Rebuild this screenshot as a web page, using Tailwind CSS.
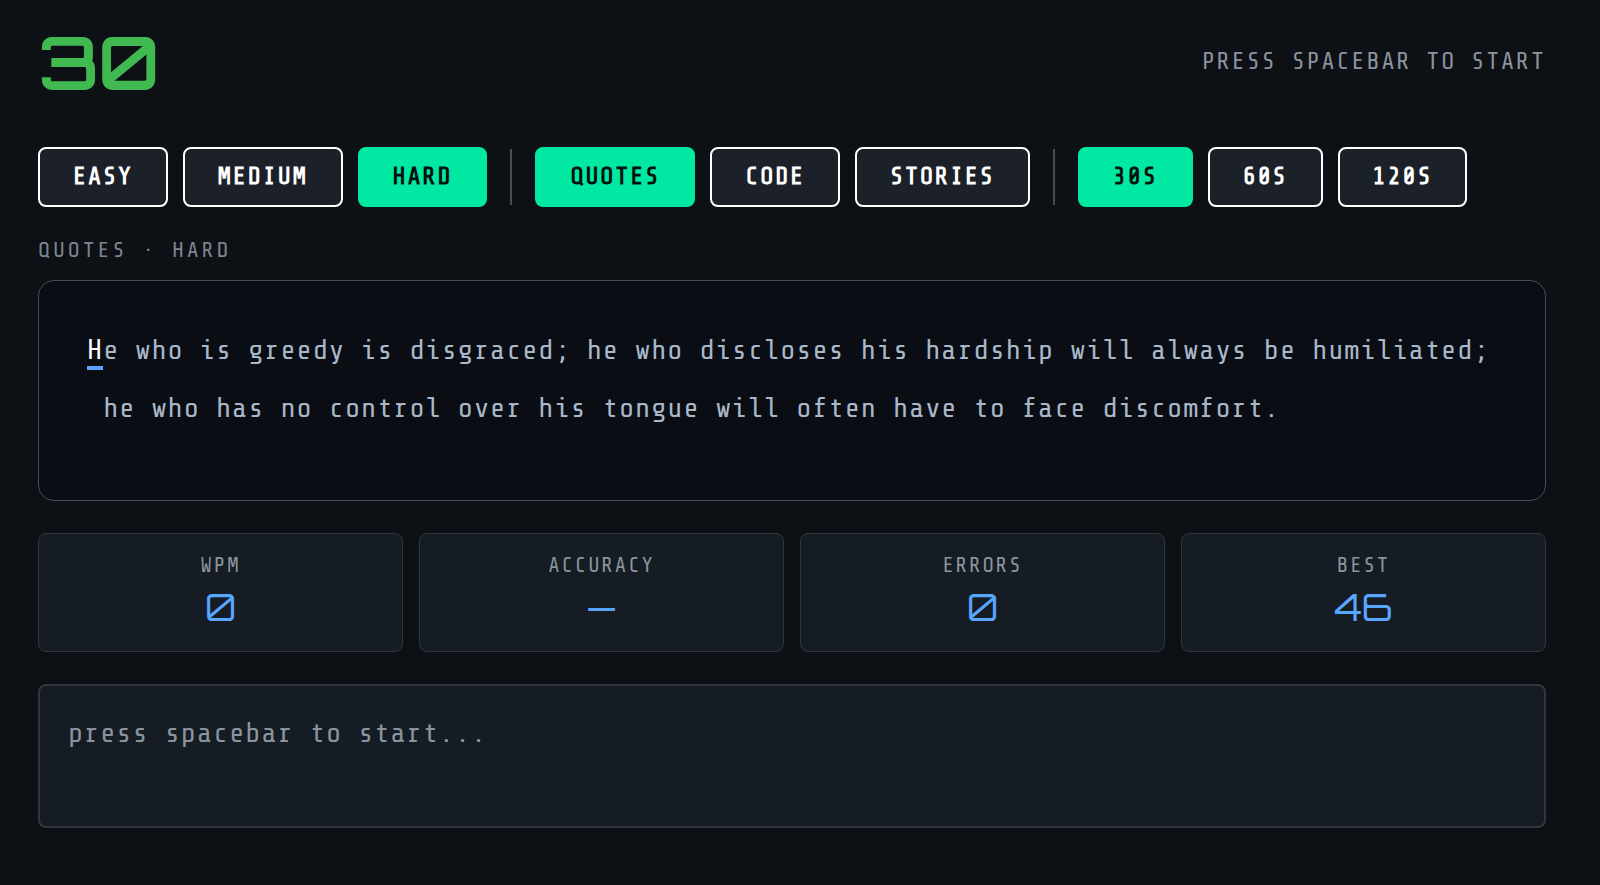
<!DOCTYPE html>
<html lang="en">
<head>
<meta charset="utf-8">
<meta name="viewport" content="width=device-width, initial-scale=1">
<title>Typing test</title>
<script src="https://cdn.jsdelivr.net/npm/@tailwindcss/browser@4"></script>
</head>
<body class="min-h-screen bg-[#0d1014] font-['Share_Tech_Mono','DejaVu_Sans_Mono',monospace] text-[#8b949e]">
<main class="flex flex-col pt-[30px] pr-[54px] pb-14 pl-[38px]">
  <header class="mb-[53px] flex items-center justify-between">
    <div role="timer" class="font-['Orbitron','Inter',sans-serif] text-[74px] leading-[64px] font-semibold tracking-[-1px] text-[#3fb950]">30</div>
    <p class="text-[24px] leading-8 tracking-[2px] text-[#8b949e] uppercase">Press spacebar to start</p>
  </header>

  <nav aria-label="Test options" class="flex flex-wrap items-center gap-[15px] text-[24px] leading-8 font-bold tracking-[2px] text-white">
    <button type="button" class="rounded-lg border-2 border-white bg-[#1c2028] px-[33px] py-3">EASY</button>
    <button type="button" class="rounded-lg border-2 border-white bg-[#1c2028] px-[33px] py-3">MEDIUM</button>
    <button type="button" aria-pressed="true" class="rounded-lg border-2 border-[#00e8a2] bg-[#00e8a2] px-[33px] py-3 text-[#04120d]">HARD</button>
    <span class="mx-2 h-14 w-[2px] bg-[#444c56]"></span>
    <button type="button" aria-pressed="true" class="rounded-lg border-2 border-[#00e8a2] bg-[#00e8a2] px-[33px] py-3 text-[#04120d]">QUOTES</button>
    <button type="button" class="rounded-lg border-2 border-white bg-[#1c2028] px-[33px] py-3">CODE</button>
    <button type="button" class="rounded-lg border-2 border-white bg-[#1c2028] px-[33px] py-3">STORIES</button>
    <span class="mx-2 h-14 w-[2px] bg-[#444c56]"></span>
    <button type="button" aria-pressed="true" class="rounded-lg border-2 border-[#00e8a2] bg-[#00e8a2] px-[33px] py-3 text-[#04120d]">30S</button>
    <button type="button" class="rounded-lg border-2 border-white bg-[#1c2028] px-[33px] py-3">60S</button>
    <button type="button" class="rounded-lg border-2 border-white bg-[#1c2028] px-[33px] py-3">120S</button>
  </nav>

  <p class="mt-[27px] mb-[14px] text-[22px] leading-8 tracking-[3px] text-[#7d8590]">QUOTES · HARD</p>

  <section aria-label="Text to type" class="min-h-[221px] rounded-2xl border border-[#444c56] bg-[#0a0d14] px-12 py-10">
    <p class="text-[28px] leading-[58px] tracking-[1px] text-[#a8b8c8]"><span class="border-b-4 border-[#58a6ff] text-white">H</span>e who is greedy is disgraced; he who discloses his hardship will always be humiliated;<span class="inline-block whitespace-pre"> </span>he who has no control over his tongue will often have to face discomfort.</p>
  </section>

  <dl class="mt-8 grid grid-cols-4 gap-4 text-center">
    <div class="rounded-lg border border-[#30363d] bg-[#151c23] pt-[17px] pb-5">
      <dt class="text-[21px] leading-7 tracking-[2px]">WPM</dt>
      <dd class="mt-1 font-['Orbitron','Inter',sans-serif] text-[37px] leading-12 font-normal text-[#58a6ff]">0</dd>
    </div>
    <div class="rounded-lg border border-[#30363d] bg-[#151c23] pt-[17px] pb-5">
      <dt class="text-[21px] leading-7 tracking-[2px]">ACCURACY</dt>
      <dd class="mt-1 font-['Orbitron','Inter',sans-serif] text-[37px] leading-12 font-normal text-[#58a6ff]">—</dd>
    </div>
    <div class="rounded-lg border border-[#30363d] bg-[#151c23] pt-[17px] pb-5">
      <dt class="text-[21px] leading-7 tracking-[2px]">ERRORS</dt>
      <dd class="mt-1 font-['Orbitron','Inter',sans-serif] text-[37px] leading-12 font-normal text-[#58a6ff]">0</dd>
    </div>
    <div class="rounded-lg border border-[#30363d] bg-[#151c23] pt-[17px] pb-5">
      <dt class="text-[21px] leading-7 tracking-[2px]">BEST</dt>
      <dd class="mt-1 font-['Orbitron','Inter',sans-serif] text-[37px] leading-12 font-normal text-[#58a6ff]">46</dd>
    </div>
  </dl>

  <textarea aria-label="Typing area" rows="2" placeholder="press spacebar to start..." class="mt-8 block w-full resize-none rounded-lg border-2 border-[#30363d] bg-[#151c23] px-7 py-6 text-[28px] leading-[46px] tracking-[1px] text-white placeholder:text-[#8b949e]"></textarea>
</main>
</body>
</html>
